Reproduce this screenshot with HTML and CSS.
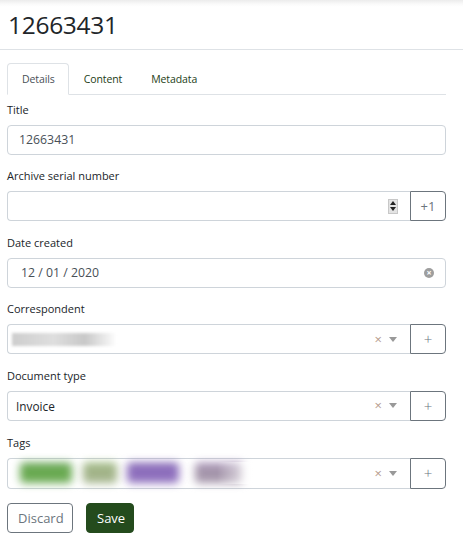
FILE: index.html
```html
<!DOCTYPE html>
<html lang="en">
<head>
<meta charset="utf-8">
<title>12663431</title>
<link rel="stylesheet" href="styles.css">
</head>
<body>
<div class="page">
  <header class="page-header">
    <h1 class="title">12663431</h1>
  </header>

  <nav class="tabs">
    <a class="tab active">Details</a>
    <a class="tab">Content</a>
    <a class="tab">Metadata</a>
  </nav>

  <form class="form">
    <div class="group">
      <label class="label">Title</label>
      <div class="field"><span class="value">12663431</span></div>
    </div>

    <div class="group">
      <label class="label">Archive serial number</label>
      <div class="input-group">
        <div class="field joined">
          <span class="value"></span>
          <span class="spin"><span class="spin-up"></span><span class="spin-down"></span></span>
        </div>
        <button type="button" class="addon">+1</button>
      </div>
    </div>

    <div class="group">
      <label class="label">Date created</label>
      <div class="field date">
        <span class="value">12 / 01 / 2020</span>
        <span class="clear-date">×</span>
      </div>
    </div>

    <div class="group">
      <label class="label">Correspondent</label>
      <div class="input-group">
        <div class="field joined select">
          <span class="blur-wrap"><span class="blur gray"></span></span>
          <span class="x">×</span>
          <span class="caret"></span>
        </div>
        <button type="button" class="addon plus">+</button>
      </div>
    </div>

    <div class="group">
      <label class="label">Document type</label>
      <div class="input-group">
        <div class="field joined select">
          <span class="value dark">Invoice</span>
          <span class="x">×</span>
          <span class="caret"></span>
        </div>
        <button type="button" class="addon plus">+</button>
      </div>
    </div>

    <div class="group">
      <label class="label">Tags</label>
      <div class="input-group">
        <div class="field joined select tall">
          <span class="tags">
            <span class="tag t1"></span>
            <span class="tag t2"></span>
            <span class="tag t3"></span>
            <span class="tag t4"></span>
            <span class="fade"></span>
          </span>
          <span class="x">×</span>
          <span class="caret"></span>
        </div>
        <button type="button" class="addon plus tall">+</button>
      </div>
    </div>

    <div class="actions">
      <button type="button" class="btn btn-outline">Discard</button>
      <button type="button" class="btn btn-primary">Save</button>
    </div>
  </form>
</div>
</body>
</html>
```

FILE: styles.css
```css
* { box-sizing: border-box; }

html, body {
  margin: 0;
  padding: 0;
  background: #fff;
}

body {
  font-family: "Open Sans", "Noto Sans", sans-serif;
  color: #212529;
  font-size: 12px;
}

.page {
  width: 463px;
  padding-right: 17px;
}

.page-header {
  height: 50px;
  border-bottom: 1px solid #dee2e6;
  background: linear-gradient(#ececec 0, #fafafa 4px, #fff 7px);
  margin-right: -17px;
  padding-left: 8px;
  display: flex;
  align-items: center;
}

.title {
  margin: 0;
  font-weight: 400;
  font-size: 24.5px;
  letter-spacing: -0.3px;
  line-height: 1;
  padding-top: 2px;
  color: #212529;
}

.tabs {
  margin: 13px 0 0 7px;
  display: flex;
  border-bottom: 1px solid #dee2e6;
  height: 32px;
}

.tab {
  display: flex;
  align-items: center;
  padding: 0 13px 0 14px;
  border: 1px solid transparent;
  border-top-left-radius: 4px;
  border-top-right-radius: 4px;
  margin-bottom: -1px;
  font-size: 10.5px;
  letter-spacing: -0.1px;
  color: #1d3d16;
}

.tab.active {
  border-color: #dee2e6 #dee2e6 #fff;
  background: #fff;
  color: #495057;
}

.form {
  padding: 5.6px 0 0 7px;
}

.group {
  margin-bottom: 12.6px;
}

.label {
  display: block;
  height: 18px;
  line-height: 18px;
  margin-bottom: 6px;
  font-size: 11px;
  font-weight: 500;
  color: #212529;
}

.field {
  height: 30px;
  border: 1px solid #ced4da;
  border-radius: 4px;
  display: flex;
  align-items: center;
  padding: 0 11px;
  font-size: 12.3px;
  color: #495057;
  background: #fff;
}

.input-group {
  display: flex;
}

.field.joined {
  flex: 1;
  border-top-right-radius: 0;
  border-bottom-right-radius: 0;
  border-right: none;
}

.value {
  flex: 1;
}

.value.dark {
  color: #212529;
  font-size: 11.8px;
}

.addon {
  width: 36px;
  height: 30px;
  border: 1px solid #6c757d;
  border-radius: 0 4px 4px 0;
  background: #fff;
  color: #6c757d;
  font-family: "Open Sans", sans-serif;
  font-size: 13px;
  padding: 0;
}

.addon.plus {
  font-size: 15px;
  font-weight: 300;
}

.addon.tall {
  height: 31px;
}

.spin {
  width: 10px;
  height: 15px;
  margin-right: 1px;
  background: #e3e3e3;
  border: 1px solid #c8c8c8;
  display: flex;
  flex-direction: column;
  align-items: center;
  justify-content: space-around;
}

.spin-up {
  width: 0;
  height: 0;
  border-left: 3px solid transparent;
  border-right: 3px solid transparent;
  border-bottom: 4px solid #222;
}

.spin-down {
  width: 0;
  height: 0;
  border-left: 3px solid transparent;
  border-right: 3px solid transparent;
  border-top: 4px solid #222;
}

.field.date {
  padding-left: 13px;
  padding-right: 11px;
}

.clear-date {
  width: 10px;
  height: 10px;
  border-radius: 50%;
  background: #9e9e9e;
  color: #fff;
  font-size: 9px;
  line-height: 10px;
  text-align: center;
  font-weight: 700;
}

.field.select {
  padding: 0 13px 0 4px;
}

.field.select .value {
  padding-left: 4px;
}

.x {
  color: #b59b8c;
  font-size: 13px;
  margin-right: 7px;
  line-height: 1;
}

.caret {
  width: 0;
  height: 0;
  border-left: 4.5px solid transparent;
  border-right: 4.5px solid transparent;
  border-top: 5px solid #999;
}

.blur-wrap {
  flex: 1;
  height: 14px;
  display: flex;
  align-items: center;
}

.blur {
  display: block;
  height: 13px;
  width: 104px;
  background: linear-gradient(90deg, #cdcdcd 0, #d6d6d6 20%, #dedede 40%, #c8c8c8 70%, #f4f4f4 95%, #fff 100%);
  filter: blur(1.5px);
}

.field.tall {
  height: 31px;
}

.tags {
  flex: 1;
  height: 22px;
  position: relative;
  display: flex;
  align-items: center;
  padding-left: 8px;
}

.tag {
  display: block;
  height: 20px;
  border-radius: 4px;
  filter: blur(4px);
}

.t1 { width: 52px; background: #6aaa52; border-top: 2px solid #3d8a2c; }
.t2 { width: 34px; margin-left: 11px; background: #a3b48a; border-top: 2px solid #7fae55; }
.t3 { width: 52px; margin-left: 10px; background: #8e6fbd; border-top: 2px solid #5d3a9a; }
.t4 { width: 48px; margin-left: 16px; background: #a596ab; border-top: 2px solid #9a7ab8; }

.fade {
  position: absolute;
  left: 205px;
  top: 0;
  width: 50px;
  height: 22px;
  background: linear-gradient(90deg, rgba(255,255,255,0), #fff 85%);
}

.actions {
  display: flex;
  gap: 13px;
  margin-top: 14px;
}

.btn {
  height: 30px;
  border-radius: 4px;
  font-family: "Open Sans", sans-serif;
  font-size: 13px;
  padding: 0 10px;
}

.btn-outline {
  border: 1px solid #6c757d;
  background: #fff;
  color: #6c757d;
  width: 66px;
}

.btn-primary {
  border: 1px solid #244b1d;
  background: #244b1d;
  color: #fff;
  width: 48px;
}
```
